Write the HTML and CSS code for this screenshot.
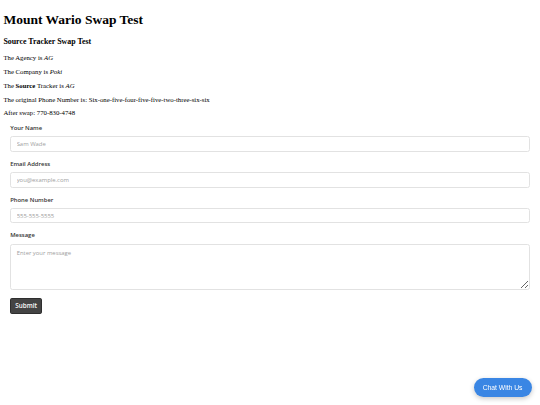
FILE: index.html
```html
<!DOCTYPE html>
<html>
<head>
<meta charset="utf-8">
<link rel="stylesheet" href="styles.css">
</head>
<body>
<h1 class="title">Mount Wario Swap Test</h1>
<h3 class="subtitle">Source Tracker Swap Test</h3>
<p class="line">The Agency is <em>AG</em></p>
<p class="line">The Company is <em>Poki</em></p>
<p class="line">The <strong>Source</strong> Tracker is <em>AG</em></p>
<p class="line">The original Phone Number is: Six-one-five-four-five-five-two-three-six-six</p>
<p class="line">After swap: 770-830-4748</p>
<form class="form">
  <div class="field">
    <label class="label">Your Name</label>
    <input class="input" type="text" placeholder="Sam Wade">
  </div>
  <div class="field">
    <label class="label">Email Address</label>
    <input class="input" type="text" placeholder="you@example.com">
  </div>
  <div class="field">
    <label class="label">Phone Number</label>
    <input class="input" type="text" placeholder="555-555-5555">
  </div>
  <div class="field">
    <label class="label">Message</label>
    <textarea class="textarea" placeholder="Enter your message"></textarea>
  </div>
  <button class="submit" type="button">Submit</button>
</form>
<button class="chat" type="button">Chat With Us</button>
</body>
</html>
```
FILE: styles.css
```css
html { background: #fff; }
body {
  margin: 3.4px;
  font-family: "Liberation Serif", serif;
  color: #000;
}
.title { font-size: 13.5px; font-weight: bold; }
.subtitle { font-size: 7.9px; font-weight: bold; }
.line { font-size: 6.75px; }
.form {
  margin: 7.6px 6.75px 0;
  font-family: "Open Sans", sans-serif;
}
.field {
  display: flex;
  flex-direction: column;
  margin-bottom: 8px;
}
.label {
  font-size: 5.9px;
  font-weight: 600;
  color: #333;
  line-height: 8.4px;
  margin-bottom: 3.8px;
}
.input, .textarea {
  box-sizing: border-box;
  width: 100%;
  height: 15.6px;
  border: 1px solid #e2e2e2;
  border-radius: 2.5px;
  padding: 0 5.5px;
  font-family: "Open Sans", sans-serif;
  font-size: 5.9px;
  color: #333;
  background: #fff;
  outline: none;
  margin: 0;
}
.textarea {
  height: 46px;
  padding: 4.2px 5.5px;
  resize: vertical;
  display: block;
}
.input::placeholder, .textarea::placeholder { color: #a0a0a0; }
.submit {
  display: block;
  background: #444;
  color: #fff;
  border: 1px solid #2e2e2e;
  border-radius: 1.7px;
  font-family: "Open Sans", sans-serif;
  font-size: 6.3px;
  font-weight: 600;
  height: 16px;
  width: 32px;
  padding: 0;
  margin: 0;
}
.chat {
  position: fixed;
  right: 8.4px;
  bottom: 8px;
  width: 58px;
  height: 19px;
  border: none;
  border-radius: 10px;
  background: #3a86e4;
  color: #fff;
  font-family: "Liberation Sans", sans-serif;
  font-size: 6.75px;
  box-shadow: 0 1.7px 5px rgba(0, 0, 0, 0.22);
  padding: 0;
}
```
